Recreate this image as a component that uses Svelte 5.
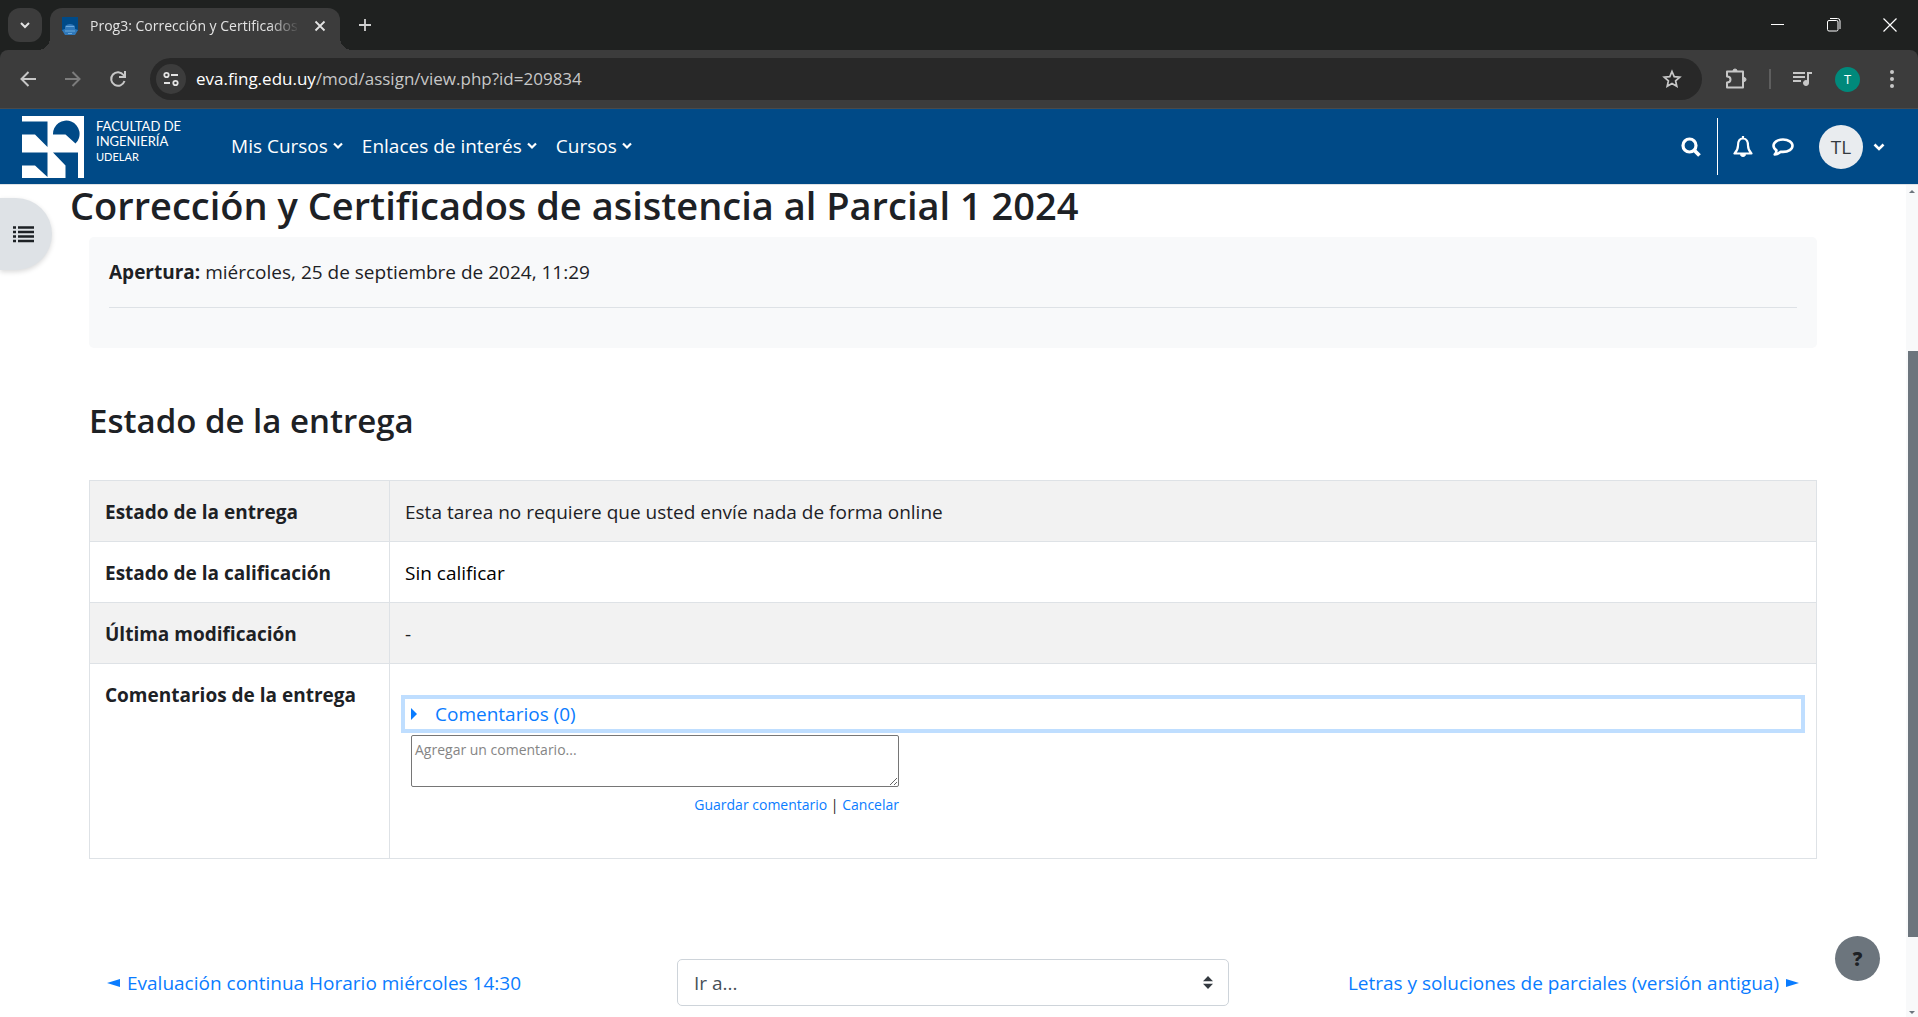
<script lang="ts">
  const menus = ['Mis Cursos', 'Enlaces de interés', 'Cursos'];

  const rows = [
    { label: 'Estado de la entrega', value: 'Esta tarea no requiere que usted envíe nada de forma online' },
    { label: 'Estado de la calificación', value: 'Sin calificar', dark: true },
    { label: 'Última modificación', value: '-' }
  ];

  let address = $state('eva.fing.edu.uy/mod/assign/view.php?id=209834');
  let comment = $state('');
  let jump = $state('');
  let drawerOpen = $state(false);

  let host = $derived(address.split('/')[0]);
  let path = $derived(address.slice(host.length));

  function cancelComment() {
    comment = '';
  }
</script>

<div class="window">
  <div class="tabstrip">
    <button class="tab-search" aria-label="Buscar pestañas">
      <svg width="12" height="12" viewBox="0 0 12 12"><path d="M2 4l4 4 4-4" fill="none" stroke="#e3e3e3" stroke-width="2" /></svg>
    </button>
    <div class="tab">
      <svg class="favicon" width="16" height="18" viewBox="0 0 16 18">
        <path d="M0 0h16v14H0z" fill="#004a87" />
        <path d="M3 9q5-4 10 0v3l3 1-3 5H3l-3-5 3-1z" fill="#2f78ba" />
        <path d="M4 9.500h8M3 14h10M6 16.500h4" stroke="#6aa9dc" stroke-width="1.200" />
      </svg>
      <span class="tab-title">Prog3: Corrección y Certificados</span>
      <button class="tab-close" aria-label="Cerrar pestaña">
        <svg width="12" height="12" viewBox="0 0 12 12"><path d="M1.500 1.500l9 9M10.500 1.500l-9 9" stroke="#e3e3e3" stroke-width="1.800" /></svg>
      </button>
    </div>
    <button class="new-tab" aria-label="Nueva pestaña">
      <svg width="14" height="14" viewBox="0 0 14 14"><path d="M7 1v12M1 7h12" stroke="#d0d0d0" stroke-width="1.800" /></svg>
    </button>
    <div class="window-buttons">
      <button aria-label="Minimizar"><svg width="14" height="14" viewBox="0 0 14 14"><path d="M0 6.500h13" stroke="#fff" /></svg></button>
      <button aria-label="Restaurar">
        <svg width="14" height="14" viewBox="0 0 14 14" fill="none" stroke="#fff">
          <rect x=".5" y="2.500" width="10.500" height="10.500" rx="1.500" />
          <path d="M3 .5h7.500q2.500 0 2.500 2.500v8" />
        </svg>
      </button>
      <button aria-label="Cerrar"><svg width="14" height="14" viewBox="0 0 14 14"><path d="M.5.5l13 13M13.500.5l-13 13" stroke="#fff" stroke-width="1.200" /></svg></button>
    </div>
  </div>

  <div class="toolbar">
    <button class="tool" aria-label="Atrás">
      <svg width="18" height="18" viewBox="0 0 18 18" fill="none" stroke="#c7c7c7" stroke-width="2"><path d="M17 9H3M9.500 2L2.500 9l7 7" /></svg>
    </button>
    <button class="tool" aria-label="Adelante" disabled>
      <svg width="18" height="18" viewBox="0 0 18 18" fill="none" stroke="#7c7c7c" stroke-width="2"><path d="M1 9h14M8.500 2l7 7-7 7" /></svg>
    </button>
    <button class="tool" aria-label="Volver a cargar">
      <svg width="18" height="18" viewBox="0 0 18 18" fill="none" stroke="#c7c7c7" stroke-width="2"><path d="M15.500 11A6.800 6.800 0 1 1 14.500 5L16 7M16 1v6h-6" /></svg>
    </button>
    <div class="omnibox">
      <button class="site-info" aria-label="Información del sitio">
        <svg width="16" height="16" viewBox="0 0 16 16" fill="none" stroke="#e3e3e3" stroke-width="1.800">
          <circle cx="3.500" cy="4" r="2.200" /><path d="M8 4h7M1 12h6" /><circle cx="12.500" cy="12" r="2.200" />
        </svg>
      </button>
      <a class="url" href="#top">{host}<span>{path}</span></a>
      <button class="star" aria-label="Agregar a favoritos">
        <svg width="20" height="20" viewBox="0 0 20 20" fill="none" stroke="#c7c7c7" stroke-width="1.700"><path d="M10 2.500l2.200 5.100 5.600.5-4.200 3.700 1.200 5.500L10 14.400l-4.800 2.900 1.200-5.500-4.200-3.700 5.600-.5z" /></svg>
      </button>
    </div>
    <div class="tool-right">
      <button aria-label="Extensiones">
        <svg width="22" height="22" viewBox="0 0 22 22" fill="none" stroke="#c7c7c7" stroke-width="2">
          <path d="M2 3.500h16v16H2v-5q3.500 0 3.500-3T2 8.500z" stroke-linejoin="round" />
          <path d="M8 3a2 2 0 0 1 4 0zM19 9.500a2 2 0 0 1 0 4z" fill="#c7c7c7" stroke-width="1" />
        </svg>
      </button>
      <span class="tool-divider"></span>
      <button aria-label="Controlar multimedia">
        <svg width="20" height="16" viewBox="0 0 20 16" fill="none" stroke="#c7c7c7" stroke-width="2">
          <path d="M0 2h12M0 6h12M0 10h8M15 12V2h4" /><circle cx="13" cy="12" r="2.500" fill="#c7c7c7" stroke-width="1" />
        </svg>
      </button>
      <button class="profile" aria-label="Perfil">T</button>
      <button class="more" aria-label="Menú">
        <svg width="6" height="20" viewBox="0 0 6 20" fill="#c7c7c7"><circle cx="3" cy="3" r="2" /><circle cx="3" cy="10" r="2" /><circle cx="3" cy="17" r="2" /></svg>
      </button>
    </div>
  </div>

  <header class="navbar">
    <a class="brand" href="#top" aria-label="Facultad de Ingeniería">
      <svg width="62" height="62" viewBox="0 0 62 62">
        <path d="M0 0h62v62H0z" fill="#fff" />
        <path d="M0 5.500h25.500v25.500L13 18.500H0zM0 36.500h25.500V61L13 49.500H0zM31 18.500a13.300 13.300 0 1 1 22.500 9L43.500 18.500zM31 36.500h25V62H43.500V49.500z" fill="#004a87" />
      </svg>
      <span class="brand-text">FACULTAD DE<br />INGENIERÍA<br /><small>UDELAR</small></span>
    </a>
    <nav class="menus">
      {#each menus as menu}
        <button>
          {menu}
          <svg width="10" height="8" viewBox="0 0 10 8"><path d="M1 1.500l4 4 4-4" fill="none" stroke="#fff" stroke-width="2.200" /></svg>
        </button>
      {/each}
    </nav>
    <div class="user-tools">
      <button class="search" aria-label="Buscar">
        <svg width="20" height="20" viewBox="0 0 20 20" fill="none" stroke="#fff" stroke-width="3.200"><circle cx="8.500" cy="8.500" r="6.500" /><path d="M13 13l5.500 5.500" stroke-width="3.800" /></svg>
      </button>
      <button class="bell" aria-label="Notificaciones">
        <svg width="20" height="22" viewBox="0 0 20 22" fill="none" stroke="#fff" stroke-width="2.200" stroke-linejoin="round">
          <path d="M10 2.500c-4 0-5 3.500-5 7 0 4-1.500 6-3.500 8h17c-2-2-3.500-4-3.500-8 0-3.500-1-7-5-7zM10 0v2.500" />
          <path d="M7.500 18.500a2.500 2 0 0 0 5 0z" fill="#fff" stroke-width="1" />
        </svg>
      </button>
      <button class="chat" aria-label="Mensajes">
        <svg width="22" height="20" viewBox="0 0 22 20" fill="none" stroke="#fff" stroke-width="2.600" stroke-linejoin="round">
          <path d="M11 2.500c5.500 0 9.500 2.800 9.500 6.200s-4 6.200-9.500 6.200q-1.200 0-2.300-.2-2.700 2.500-6 2.800 1.700-1.500 1.800-4.200Q1.500 11.300 1.500 8.700c0-3.400 4-6.200 9.500-6.200z" />
        </svg>
      </button>
      <button class="user" aria-label="Menú de usuario">
        <span class="avatar">TL</span>
        <svg width="12" height="8" viewBox="0 0 12 8"><path d="M1.500 1.500L6 6l4.500-4.500" fill="none" stroke="#fff" stroke-width="2.600" /></svg>
      </button>
    </div>
  </header>

  <div class="viewport">
    <main class="page" id="top">
      <h1>Corrección y Certificados de asistencia al Parcial 1 2024</h1>

      <section class="dates">
        <p><strong>Apertura:</strong> miércoles, 25 de septiembre de 2024, 11:29</p>
        <hr />
      </section>

      <section class="status">
        <h2>Estado de la entrega</h2>
        <table>
          <tbody>
            {#each rows as row}
              <tr>
                <th scope="row">{row.label}</th>
                <td class:dark={row.dark}>{row.value}</td>
              </tr>
            {/each}
            <tr>
              <th scope="row">Comentarios de la entrega</th>
              <td class="comments">
                <a class="comment-link" href="#comments">
                  <svg width="6" height="12" viewBox="0 0 6 12"><path d="M0 0l6 6-6 6z" fill="#0a7cff" /></svg>
                  Comentarios (0)
                </a>
                <div class="comment-form" id="comments">
                  <textarea bind:value={comment} aria-label="Comentario" placeholder="Agregar un comentario..." rows="2"></textarea>
                  <div class="comment-actions">
                    <a href="#comments">Guardar comentario</a> | <a href="#comments" onclick={cancelComment}>Cancelar</a>
                  </div>
                </div>
              </td>
            </tr>
          </tbody>
        </table>
      </section>

      <nav class="activity-nav">
        <a href="#prev">
          <svg width="13" height="8" viewBox="0 0 13 8"><path d="M13 0v8L0 4z" fill="#0a7cff" /></svg>
          Evaluación continua Horario miércoles 14:30
        </a>
        <div class="jump">
          <select bind:value={jump} aria-label="Ir a...">
            <option value="">Ir a...</option>
          </select>
          <svg width="10" height="13" viewBox="0 0 10 13"><path d="M0 5.200L5 0l5 5.200zM0 7.800L5 13l5-5.200z" fill="#343a40" /></svg>
        </div>
        <a class="next" href="#next">
          Letras y soluciones de parciales (versión antigua)
          <svg width="13" height="8" viewBox="0 0 13 8"><path d="M0 0v8l13-4z" fill="#0a7cff" /></svg>
        </a>
      </nav>
    </main>

    <div class="scrollbar">
      <svg width="12" height="12" viewBox="0 0 12 12"><path d="M3 8l3-3 3 3z" fill="#6c757d" /></svg>
      <div class="track"><div class="thumb"></div></div>
      <svg width="12" height="12" viewBox="0 0 12 12"><path d="M3 6l3 3 3-3z" fill="#6c757d" /></svg>
    </div>

    <button class="drawer-toggle" aria-label="Abrir índice del curso" aria-expanded={drawerOpen} onclick={() => (drawerOpen = !drawerOpen)}>
      <svg width="21" height="17" viewBox="0 0 21 17"><path d="M0 1.500h3M5 1.500h16M0 6h3M5 6h16M0 10.500h3M5 10.500h16M0 15h3M5 15h16" stroke="#1d2125" stroke-width="2.600" /></svg>
    </button>
    <button class="help" aria-label="Ayuda">?</button>
  </div>
</div>

<style>
  :global(body) {
    margin: 0;
  }

  .window {
    height: 100vh;
    display: flex;
    flex-direction: column;
    overflow: hidden;
    background: #1f2120;
    color: #1d2125;
    font-family: 'Open Sans', 'Noto Sans', sans-serif;
    font-size: 19px;
    line-height: 30px;
  }

  button {
    display: flex;
    align-items: center;
    justify-content: center;
    padding: 0;
    border: 0;
    background: none;
    color: inherit;
    font: inherit;
    cursor: pointer;
  }

  a {
    color: #0a7cff;
    text-decoration: none;
  }

  svg {
    flex: none;
  }

  /* browser frame */
  .tabstrip {
    display: flex;
    flex: none;
    height: 50px;
  }

  .tab-search {
    width: 34px;
    height: 34px;
    margin: 8px 8px 0;
    border-radius: 12px;
    background: #3c3c3c;
  }

  .tab {
    position: relative;
    display: flex;
    align-items: center;
    box-sizing: border-box;
    width: 290px;
    height: 42px;
    margin-top: 8px;
    padding: 0 12px 6px;
    border-radius: 12px 12px 0 0;
    background: #3c3c3c;
    color: #e3e3e3;
    font-size: 14px;
  }

  .tab::before,
  .tab::after {
    content: '';
    position: absolute;
    bottom: 0;
    width: 12px;
    height: 12px;
  }

  .tab::before {
    right: 100%;
    background: radial-gradient(circle at 0 0, transparent 12px, #3c3c3c 12px);
  }

  .tab::after {
    left: 100%;
    background: radial-gradient(circle at 100% 0, transparent 12px, #3c3c3c 12px);
  }

  .tab-title {
    flex: 1;
    margin: 0 12px;
    overflow: hidden;
    white-space: nowrap;
    mask-image: linear-gradient(to right, #000 85%, transparent);
  }

  .tab-close {
    width: 16px;
    height: 20px;
  }

  .new-tab {
    width: 34px;
    margin-left: 8px;
  }

  .window-buttons {
    display: flex;
    margin-left: auto;
  }

  .window-buttons button {
    width: 56px;
  }

  .toolbar {
    display: flex;
    flex: none;
    align-items: center;
    height: 58px;
    padding-left: 5px;
    border-bottom: 1px solid #4a4a4a;
    border-radius: 8px 8px 0 0;
    background: #3c3c3c;
  }

  .tool {
    width: 45px;
    height: 42px;
  }

  .omnibox {
    display: flex;
    flex: 1;
    align-items: center;
    height: 42px;
    margin-left: 10px;
    padding: 0 20px 0 6px;
    border-radius: 21px;
    background: #282828;
  }

  .site-info {
    width: 30px;
    height: 30px;
    border-radius: 50%;
    background: #3c3c3c;
  }

  .url {
    flex: 1;
    margin-left: 10px;
    color: #fff;
    font-size: 17px;
  }

  .url span {
    color: #c7c7c7;
  }

  .tool-right {
    display: flex;
    align-items: center;
    gap: 22px;
    padding: 0 23px;
  }

  .tool-divider {
    width: 2px;
    height: 20px;
    background: #5e5e5e;
  }

  .profile {
    width: 25px;
    height: 25px;
    border-radius: 50%;
    background: #00897b;
    color: #fff;
    font-size: 13px;
  }

  .more {
    margin-left: 7px;
  }

  /* site header */
  .navbar {
    display: flex;
    flex: none;
    align-items: center;
    height: 75px;
    padding: 0 33px 0 22px;
    border-bottom: 1px solid #dee2e6;
    background: #004a87;
    color: #fff;
  }

  .brand {
    display: flex;
    gap: 12px;
    color: #fff;
    font-family: Lato, sans-serif;
    font-size: 13px;
    line-height: 15px;
  }

  .brand-text {
    padding-top: 3px;
  }

  .brand small {
    font-size: 11px;
  }

  .menus {
    display: flex;
    gap: 19px;
    margin-left: 50px;
    padding-bottom: 2px;
  }

  .menus button {
    gap: 5px;
  }

  .user-tools {
    display: flex;
    align-items: center;
    margin-left: auto;
  }

  .search {
    height: 57px;
    padding-right: 16px;
    border-right: 1px solid #fff;
  }

  .bell {
    margin-left: 15px;
  }

  .chat {
    margin-left: 19px;
  }

  .user {
    gap: 10px;
    margin-left: 25px;
  }

  .avatar {
    width: 44px;
    border-radius: 50%;
    background: #e9ecef;
    color: #343a40;
    line-height: 44px;
  }

  /* page */
  .viewport {
    position: relative;
    display: flex;
    flex: 1;
    min-height: 0;
    background: #fff;
  }

  .page {
    flex: 1;
    padding: 0 89px;
    overflow: hidden;
  }

  h1,
  h2 {
    margin: 0;
    font-weight: 600;
  }

  h1 {
    margin: 0 0 12px -19px;
    font-size: 38px;
    line-height: 40px;
  }

  .dates {
    padding: 20px 20px 40px;
    border-radius: 5px;
    background: #f8f9fa;
  }

  .dates p {
    margin: 0;
  }

  hr {
    margin: 20px 0 0;
    border: 0;
    border-top: 1px solid #dee2e6;
  }

  h2 {
    margin: 52px 0 38px;
    font-size: 33px;
    line-height: 42px;
  }

  table {
    width: 100%;
    border-collapse: collapse;
  }

  th,
  td {
    padding: 16px 15px 14px;
    border: 1px solid #dee2e6;
    text-align: left;
    vertical-align: top;
  }

  th {
    width: 269px;
    font-weight: 700;
  }

  tr:nth-child(odd) {
    background: #f2f2f2;
  }

  .dark {
    color: #000;
  }

  .comments {
    padding: 35px 15px 38px;
  }

  .comment-link {
    display: flex;
    align-items: center;
    gap: 18px;
    padding-left: 6px;
    outline: 4px solid #bfdeff;
  }

  .comment-form {
    width: 488px;
    padding: 6px 0 0 6px;
    font-size: 14px;
  }

  textarea {
    display: block;
    box-sizing: border-box;
    width: 100%;
    height: 52px;
    padding: 3px;
    border: 1px solid #767676;
    border-radius: 2px;
    color: #1d2125;
    font: inherit;
    line-height: 22px;
  }

  textarea::placeholder {
    color: #858585;
  }

  .comment-actions {
    padding-top: 3px;
    text-align: right;
  }

  .activity-nav {
    display: grid;
    grid-template-columns: 1fr 552px 1fr;
    align-items: center;
    padding: 0 18px;
    margin-top: 100px;
  }

  .activity-nav > a {
    display: flex;
    align-items: center;
    gap: 7px;
  }

  .activity-nav .next {
    justify-content: flex-end;
  }

  .jump {
    position: relative;
  }

  .jump svg {
    position: absolute;
    top: 17px;
    right: 16px;
    pointer-events: none;
  }

  select {
    display: block;
    appearance: none;
    width: 100%;
    height: 47px;
    padding: 0 16px;
    border: 1px solid #ced4da;
    border-radius: 5px;
    background: #fff;
    color: #495057;
    font: inherit;
  }

  .scrollbar {
    display: flex;
    flex: none;
    flex-direction: column;
    width: 12px;
    background: #f8f9fa;
  }

  .scrollbar svg {
    display: block;
  }

  .track {
    display: flex;
    flex: 1;
    flex-direction: column;
  }

  .track::before {
    content: '';
    flex: 154;
  }

  .track::after {
    content: '';
    flex: 68;
  }

  .thumb {
    flex: 586;
    margin-left: 2px;
    background: #6c757d;
  }

  /* floating buttons */
  .drawer-toggle {
    position: absolute;
    top: 13px;
    left: 0;
    width: 52px;
    height: 72px;
    padding-right: 5px;
    border-radius: 0 36px 36px 0;
    background: #dee2e6;
    box-shadow: 0 2px 5px rgba(0, 0, 0, 0.15);
  }

  .help {
    position: absolute;
    right: 38px;
    bottom: 36px;
    width: 45px;
    height: 45px;
    border-radius: 50%;
    background: #6c757d;
    color: #1d2125;
    font-weight: 800;
  }
</style>
